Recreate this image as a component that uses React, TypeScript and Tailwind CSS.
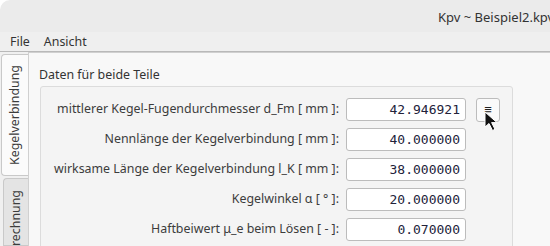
import React from "react";

const rows = [
  { label: "mittlerer Kegel-Fugendurchmesser d_Fm [ mm ]:", value: "42.946921", menu: true },
  { label: "Nennlänge der Kegelverbindung [ mm ]:", value: "40.000000" },
  { label: "wirksame Länge der Kegelverbindung l_K [ mm ]:", value: "38.000000" },
  { label: "Kegelwinkel α [ ° ]:", value: "20.000000" },
  { label: "Haftbeiwert μ_e beim Lösen [ - ]:", value: "0.070000" },
];

const Cursor = () => (
  <svg className="absolute left-[484px] top-[111px]" width="20" height="22" viewBox="0 0 20 22">
    <path d="M1 1 L1 16 L5 12.5 L8.5 19.5 L11 18.3 L7.6 11.6 L13 11.6 Z" fill="#111" stroke="#fff" strokeWidth="1" />
  </svg>
);

export default function App() {
  return (
    <div className="relative w-[550px] h-[246px] overflow-hidden rounded-tl-[10px] bg-[#ebebeb] text-[12.4px] text-[#3c3c3c] font-['Noto_Sans',sans-serif]">
      <div className="h-[32px] flex items-center pt-[3px] pl-[438px] whitespace-nowrap text-[13px] text-[#333]">Kpv ~ Beispiel2.kpv</div>
      <div className="h-[20px] bg-[#efefef] flex items-center pt-[2px] gap-[14px] px-[10px] border-b border-[#b9b9b9] text-[#333]">
        <span>File</span>
        <span>Ansicht</span>
      </div>
      <div className="flex h-[194px] bg-[#f0f0f0]">
        <div className="w-[28px] flex flex-col pt-[2px] pl-[1px]">
          <div className="h-[122px] bg-[#fbfbfb] border border-r-0 border-[#c9c9c9] rounded-tl-[4px] rounded-bl-[4px] flex items-center justify-center">
            <span className="[writing-mode:vertical-rl] rotate-180 whitespace-nowrap">Kegelverbindung</span>
          </div>
          <div className="mt-[2px] ml-[2px] flex-1 bg-[#e4e4e4] border border-r-0 border-[#c9c9c9] rounded-tl-[4px] flex flex-col items-center justify-start pt-[11px] overflow-hidden">
            <span className="[writing-mode:vertical-rl] rotate-180 whitespace-nowrap">Berechnung</span>
          </div>
        </div>
        <div className="flex-1 bg-[#f8f8f8] border-l border-t border-[#d0d0d0] pl-[10px] pt-[13px]">
          <div className="text-[#333] leading-[17px]">Daten für beide Teile</div>
          <div className="mt-[3px] ml-[1px] w-[473px] h-[170px] bg-[#f4f4f4] border border-[#dcdcdc] rounded-[3px] pt-[11px] flex flex-col gap-[7px]">
            {rows.map((r) => (
              <div key={r.label} className="flex items-center h-[23px]">
                <div className="w-[305px] text-right pr-[7px] whitespace-nowrap">{r.label}</div>
                <div className="w-[120px] h-[23px] bg-white border border-[#bcbcbc] rounded-[3px] flex items-center justify-end pr-[5px] font-['DejaVu_Sans_Mono',monospace] text-[13px] text-[#22223a]">
                  {r.value}
                </div>
                {r.menu && (
                  <div className="ml-[10px] w-[24px] h-[24px] bg-[#fafafa] border border-[#bcbcbc] rounded-[3px] flex items-center justify-center text-[13px] font-bold text-[#222]">≡</div>
                )}
              </div>
            ))}
          </div>
        </div>
      </div>
      <Cursor />
    </div>
  );
}
